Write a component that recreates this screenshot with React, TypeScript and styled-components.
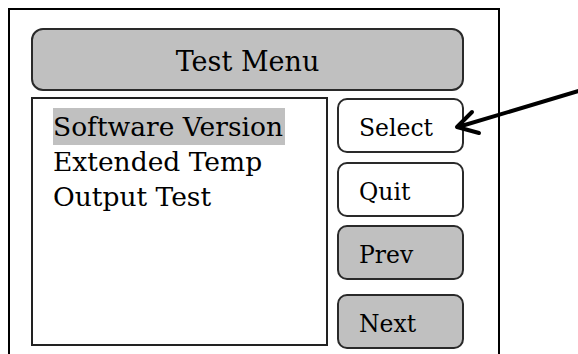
import React from 'react';
import styled, { createGlobalStyle } from 'styled-components';

const GlobalStyle = createGlobalStyle`
  html, body {
    margin: 0;
    padding: 0;
    background: #ffffff;
  }
  body {
    font-family: "DejaVu Serif", "Liberation Serif", serif;
    color: #000;
  }
`;

const Page = styled.div`
  position: relative;
  width: 578px;
  height: 354px;
  overflow: hidden;
  padding: 8px 0 0 8px;
  box-sizing: border-box;
`;

const Frame = styled.div`
  width: 492px;
  height: 360px;
  box-sizing: border-box;
  border: 2px solid #000;
  border-bottom: none;
  padding: 18px 34px 0 21px;
`;

const TitleBar = styled.div`
  height: 63px;
  box-sizing: border-box;
  border: 2px solid #2a2a2a;
  border-radius: 12px;
  background: #c0c0c0;
  padding-top: 7px;
  line-height: 50px;
  font-size: 27px;
  text-align: center;
  margin-bottom: 6px;
`;

const Body = styled.div`
  display: flex;
  gap: 9px;
  align-items: flex-start;
`;

const MenuList = styled.div`
  width: 297px;
  height: 249px;
  box-sizing: border-box;
  border: 2px solid #222;
  padding: 10px 0 0 20px;
  font-size: 26.5px;
  line-height: 35px;
`;

const MenuItem = styled.div<{ $selected?: boolean }>`
  width: fit-content;
  white-space: nowrap;
  background: ${(p) => (p.$selected ? '#c0c0c0' : 'transparent')};
  padding: ${(p) => (p.$selected ? '1px 2px 1px 0' : '0')};
  margin: ${(p) => (p.$selected ? '-1px 0' : '0')};
`;

const ButtonColumn = styled.div`
  display: flex;
  flex-direction: column;
  width: 127px;
`;

const SoftButton = styled.div<{ $shaded?: boolean; $offset: number }>`
  height: 55px;
  box-sizing: border-box;
  margin-top: ${(p) => p.$offset}px;
  border: 2px solid #2a2a2a;
  border-radius: 10px;
  background: ${(p) => (p.$shaded ? '#c0c0c0' : '#ffffff')};
  padding: 13px 0 0 20px;
  font-size: 23.5px;
  line-height: 30px;
`;

const Pointer = styled.svg`
  position: absolute;
  left: 0;
  top: 0;
  pointer-events: none;
`;

const menuItems = ['Software Version', 'Extended Temp', 'Output Test'];

const buttons = [
  { label: 'Select', offset: 1, shaded: false },
  { label: 'Quit', offset: 9, shaded: false },
  { label: 'Prev', offset: 8, shaded: true },
  { label: 'Next', offset: 14, shaded: true }
];

export default function App(): JSX.Element {
  return (
    <Page>
      <GlobalStyle />
      <Frame>
        <TitleBar>Test Menu</TitleBar>
        <Body>
          <MenuList>
            {menuItems.map((item, i) => (
              <MenuItem key={item} $selected={i === 0}>
                {item}
              </MenuItem>
            ))}
          </MenuList>
          <ButtonColumn>
            {buttons.map((b) => (
              <SoftButton key={b.label} $offset={b.offset} $shaded={b.shaded}>
                {b.label}
              </SoftButton>
            ))}
          </ButtonColumn>
        </Body>
      </Frame>
      {/* callout arrow pointing at Select */}
      <Pointer width="578" height="354" viewBox="0 0 578 354">
        <g stroke="#000" strokeWidth="4" fill="none" strokeLinecap="round" strokeLinejoin="round">
          <line x1="582" y1="90" x2="458" y2="127" />
          <polyline points="472,112 457,127 479,133" />
        </g>
      </Pointer>
    </Page>
  );
}
